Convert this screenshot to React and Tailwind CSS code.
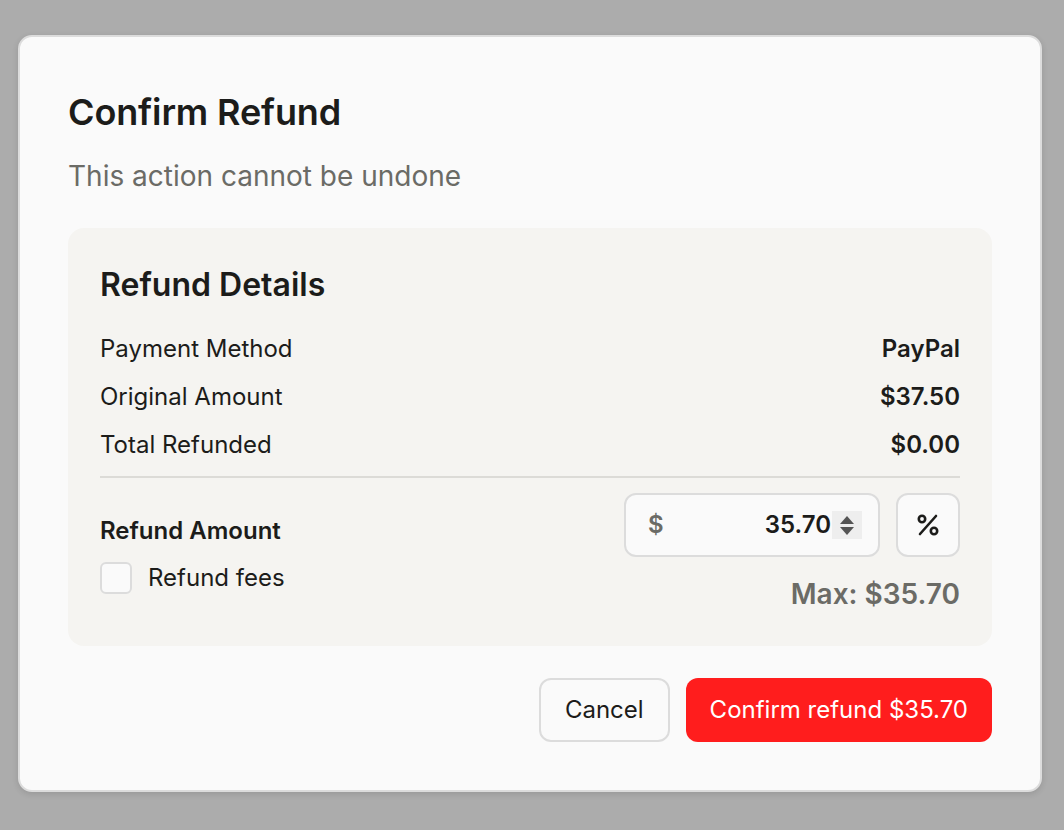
export default function App() {
  const rows = [
    ["Payment Method", "PayPal"],
    ["Original Amount", "$37.50"],
    ["Total Refunded", "$0.00"],
  ];
  return (
    <div
      className="min-h-screen w-full bg-[#acacac] pt-[35px] pl-[18px]"
      style={{ fontFamily: "Inter, 'Noto Sans', sans-serif" }}
    >
      <div className="w-[1024px] rounded-[14px] border-2 border-[#dcdcdc] bg-[#fafafa] p-[48px] text-[#1c1c1a] shadow-[0_2px_6px_rgba(0,0,0,0.12)]">
        <h1 className="mt-[5px] text-[36px] font-semibold leading-[44px] tracking-[-0.004em]">Confirm Refund</h1>
        <p className="mt-[24px] text-[28px] leading-[36px] text-[#6b6b66]">This action cannot be undone</p>

        <div className="mt-[34px] rounded-[16px] bg-[#f5f4f1] px-[32px] pt-[37px] pb-[36px]">
          <h2 className="text-[32px] font-semibold leading-[40px]">Refund Details</h2>
          <div className="mt-[20px] flex flex-col">
            {rows.map(([k, v]) => (
              <div key={k} className="flex h-[48px] items-center justify-between text-[24px]">
                <span>{k}</span>
                <span className="font-semibold">{v}</span>
              </div>
            ))}
          </div>
          <div className="mt-[7px] h-[2px] bg-[#dcdbd7]" />
          <div className="mt-[15px] flex items-start justify-between">
            <div className="flex flex-col pt-[22px]">
              <span className="text-[24px] font-semibold leading-[32px]">Refund Amount</span>
              <label className="mt-[15px] flex items-center gap-[16px]">
                <span className="h-[32px] w-[32px] rounded-[6px] border-2 border-[#dcdcdc] bg-[#fafafa]" />
                <span className="text-[24px] leading-[32px]">Refund fees</span>
              </label>
            </div>
            <div className="flex flex-col items-end">
              <div className="flex gap-[16px]">
                <div className="flex h-[64px] w-[256px] items-center rounded-[12px] border-2 border-[#dcdcdc] bg-[#fafafa] pl-[22px] pr-[16px]">
                  <span className="text-[24px] font-semibold text-[#6b6b66]">$</span>
                  <span className="ml-auto text-[24px] font-semibold">35.70</span>
                  <span className="ml-[1px] flex h-[28px] w-[30px] flex-col items-center justify-center gap-[3px] bg-[#eeeeee]">
                    <svg width="14" height="8" viewBox="0 0 14 8"><path d="M7 0L14 8H0Z" fill="#555" /></svg>
                    <svg width="14" height="8" viewBox="0 0 14 8"><path d="M0 0H14L7 8Z" fill="#555" /></svg>
                  </span>
                </div>
                <div className="flex h-[64px] w-[64px] items-center justify-center rounded-[12px] border-2 border-[#dcdcdc] bg-[#fafafa]">
                  <svg width="26" height="26" viewBox="0 0 26 26" fill="none" stroke="#1c1c1a" strokeWidth="2.6" strokeLinecap="round">
                    <path d="M21 4L5 22" />
                    <circle cx="7" cy="7" r="3.2" />
                    <circle cx="19" cy="19" r="3.2" />
                  </svg>
                </div>
              </div>
              <span className="mt-[21px] text-[28px] font-semibold leading-[32px] text-[#6b6b66]">Max: $35.70</span>
            </div>
          </div>
        </div>

        <div className="mt-[32px] flex justify-end gap-[16px]">
          <button className="h-[64px] rounded-[12px] border-2 border-[#dcdcdc] bg-[#fafafa] px-[24px] text-[24px] text-[#1c1c1a]">Cancel</button>
          <button className="h-[64px] rounded-[12px] bg-[#ff1d1d] px-[24px] text-[24px] text-white">Confirm refund $35.70</button>
        </div>
      </div>
    </div>
  );
}
